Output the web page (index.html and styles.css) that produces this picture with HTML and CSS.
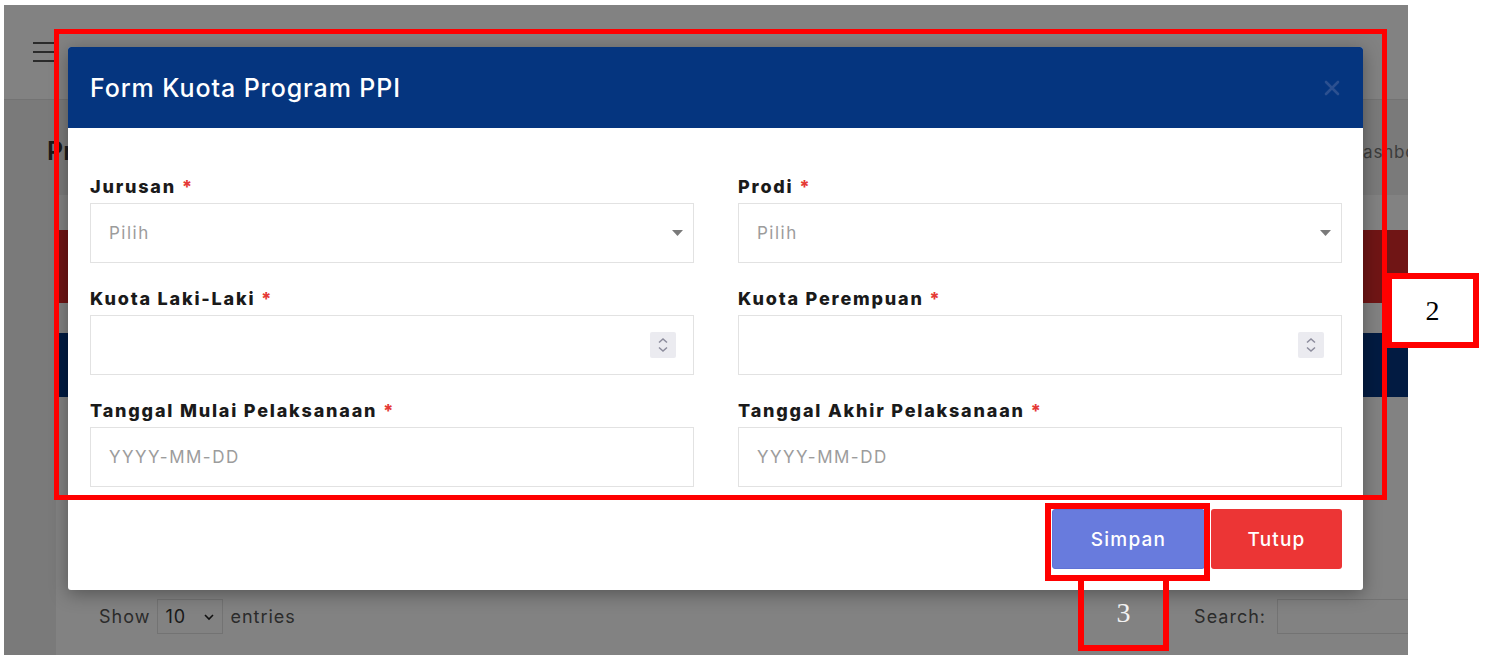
FILE: index.html
```html
<!DOCTYPE html>
<html lang="id">
<head>
    <meta charset="UTF-8">
    <meta name="viewport" content="width=device-width, initial-scale=1.0">
    <title>Form Kuota Program PPI</title>
    <link rel="stylesheet" href="styles.css">
</head>
<body>
    <div class="screen">
        <header class="navbar">
            <div class="hamburger">
                <span></span>
                <span></span>
                <span></span>
            </div>
        </header>

        <div class="content">
            <div class="section-header">
                <h1>Program PPI</h1>
                <div class="breadcrumb">Dashboard</div>
            </div>

            <div class="card">
                <div class="alert-bar"></div>
                <div class="table-head"></div>
                <div class="dt-top">
                    <div class="dt-length">
                        Show
                        <div class="dt-select">10
                            <svg width="12" height="8" viewBox="0 0 12 8"><polyline points="2,2 6,6 10,2" fill="none" stroke="#222" stroke-width="1.6"/></svg>
                        </div>
                        entries
                    </div>
                    <div class="dt-search">
                        Search:
                        <div class="dt-input"></div>
                    </div>
                </div>
            </div>
        </div>

        <div class="backdrop"></div>

        <div class="modal">
            <div class="modal-header">
                <h2>Form Kuota Program PPI</h2>
                <button class="close-btn">
                    <svg width="16" height="16" viewBox="0 0 16 16"><path d="M2 2 L14 14 M14 2 L2 14" stroke="#2c5090" stroke-width="2.6" stroke-linecap="round"/></svg>
                </button>
            </div>
            <div class="modal-body">
                <div class="form-group">
                    <label>Jurusan <span class="req">*</span></label>
                    <div class="form-control select">
                        <span class="placeholder">Pilih</span>
                        <svg width="11" height="6" viewBox="0 0 11 6"><polygon points="0,0 11,0 5.5,6" fill="#7a7a7a"/></svg>
                    </div>
                </div>
                <div class="form-group">
                    <label>Prodi <span class="req">*</span></label>
                    <div class="form-control select">
                        <span class="placeholder">Pilih</span>
                        <svg width="11" height="6" viewBox="0 0 11 6"><polygon points="0,0 11,0 5.5,6" fill="#7a7a7a"/></svg>
                    </div>
                </div>
                <div class="form-group">
                    <label>Kuota Laki-Laki <span class="req">*</span></label>
                    <div class="form-control number">
                        <span class="placeholder"></span>
                        <span class="spinner">
                            <svg width="26" height="26" viewBox="0 0 26 26"><polyline points="9,10.5 13,7 17,10.5" fill="none" stroke="#8c8c9c" stroke-width="1.5"/><polyline points="9,15.5 13,19 17,15.5" fill="none" stroke="#8c8c9c" stroke-width="1.5"/></svg>
                        </span>
                    </div>
                </div>
                <div class="form-group">
                    <label>Kuota Perempuan <span class="req">*</span></label>
                    <div class="form-control number">
                        <span class="placeholder"></span>
                        <span class="spinner">
                            <svg width="26" height="26" viewBox="0 0 26 26"><polyline points="9,10.5 13,7 17,10.5" fill="none" stroke="#8c8c9c" stroke-width="1.5"/><polyline points="9,15.5 13,19 17,15.5" fill="none" stroke="#8c8c9c" stroke-width="1.5"/></svg>
                        </span>
                    </div>
                </div>
                <div class="form-group">
                    <label>Tanggal Mulai Pelaksanaan <span class="req">*</span></label>
                    <div class="form-control">
                        <span class="placeholder">YYYY-MM-DD</span>
                    </div>
                </div>
                <div class="form-group">
                    <label>Tanggal Akhir Pelaksanaan <span class="req">*</span></label>
                    <div class="form-control">
                        <span class="placeholder">YYYY-MM-DD</span>
                    </div>
                </div>
            </div>
            <div class="modal-footer">
                <button class="btn btn-primary">Simpan</button>
                <button class="btn btn-danger">Tutup</button>
            </div>
        </div>
    </div>

    <!-- annotation boxes drawn on top of the screenshot -->
    <div class="mark mark-form"></div>
    <div class="mark mark-label mark-2">2</div>
    <div class="mark mark-save"></div>
    <div class="mark mark-label mark-3">3</div>
</body>
</html>
```

FILE: styles.css
```css
body {
    margin: 0;
    background-color: #fff;
    font-family: 'Inter', 'Open Sans', sans-serif;
    position: relative;
    height: 665px;
    overflow: hidden;
}
.screen {
    position: relative;
    width: 1404px;
    height: 650px;
    margin: 5px 0 0 4px;
    background-color: #efefef;
    overflow: hidden;
}

/* page behind the modal */
.navbar {
    height: 95px;
    background-color: #fff;
    border-bottom: 1px solid #e2e2e2;
    box-sizing: border-box;
    display: flex;
    align-items: center;
    padding-left: 29px;
}
.hamburger {
    display: flex;
    flex-direction: column;
    gap: 6.5px;
}
.hamburger span {
    width: 24px;
    height: 2.5px;
    background-color: #555;
}
.content {
    padding-left: 43px;
}
.section-header {
    display: grid;
    grid-template-columns: 1303px max-content;
    align-items: center;
    padding-top: 36px;
    height: 30px;
}
.section-header h1 {
    margin: 0;
    font-size: 25px;
    font-weight: 600;
    color: #333;
    line-height: 30px;
}
.breadcrumb {
    font-size: 17px;
    letter-spacing: 0.8px;
    color: #777;
    white-space: nowrap;
    margin-top: 2px;
}
.card {
    width: 1445px;
    margin: 29px 0 0 9px;
    padding-top: 35px;
    height: 460px;
    background-color: #fff;
}
.alert-bar {
    height: 73px;
    background-color: #dc2a2a;
}
.table-head {
    height: 64px;
    margin-top: 30px;
    background-color: #053582;
}
.dt-top {
    display: flex;
    align-items: center;
    justify-content: space-between;
    margin-top: 202px;
    padding: 0 43px;
    height: 35px;
    font-size: 18px;
    letter-spacing: 1px;
    color: #555;
}
.dt-length, .dt-search {
    display: flex;
    align-items: center;
    gap: 7px;
}
.dt-select {
    width: 66px;
    height: 35px;
    box-sizing: border-box;
    border: 1px solid #e2e2e2;
    display: flex;
    align-items: center;
    justify-content: space-between;
    padding: 0 7px;
    color: #333;
}
.dt-search {
    gap: 11px;
}
.dt-input {
    width: 181px;
    height: 35px;
    box-sizing: border-box;
    border: 1px solid #e2e2e2;
}
.backdrop {
    position: absolute;
    inset: 0;
    background-color: rgba(0, 0, 0, 0.49);
}

/* modal */
.modal {
    position: absolute;
    left: 64px;
    top: 42px;
    width: 1295px;
    background-color: #fff;
    border-radius: 3px;
    box-shadow: 0 4px 18px rgba(0, 0, 0, 0.35);
}
.modal-header {
    height: 81px;
    background-color: #05357f;
    border-radius: 3px 3px 0 0;
    display: flex;
    align-items: center;
    justify-content: space-between;
    padding: 0 23px 0 22px;
}
.modal-header h2 {
    margin: 0;
    font-size: 25px;
    font-weight: 500;
    letter-spacing: 0.9px;
    color: #fff;
}
.close-btn {
    background: none;
    border: none;
    padding: 0;
    display: flex;
}
.modal-body {
    display: grid;
    grid-template-columns: 1fr 1fr;
    column-gap: 44px;
    row-gap: 24px;
    padding: 47px 21px 0 22px;
}
.form-group label {
    display: block;
    font-size: 18px;
    font-weight: 800;
    letter-spacing: 1.8px;
    line-height: 24px;
    color: #1a1a1a;
    margin-bottom: 4px;
}
.req {
    color: #e53935;
}
.form-control {
    height: 60px;
    box-sizing: border-box;
    border: 1px solid #e2e2e2;
    display: flex;
    align-items: center;
    justify-content: space-between;
    padding: 0 18px;
    font-size: 17px;
    letter-spacing: 1.5px;
}
.form-control.select {
    padding-right: 10px;
}
.form-control.number {
    padding-right: 17px;
}
.placeholder {
    color: #9c9c9c;
}
.spinner {
    display: flex;
    background-color: #ebebf0;
    border-radius: 2px;
}
.modal-footer {
    display: flex;
    justify-content: flex-end;
    gap: 6px;
    padding: 22px 21px 21px;
}
.btn {
    height: 60px;
    border: 1px solid transparent;
    border-radius: 3px;
    font-family: inherit;
    font-size: 19px;
    font-weight: 500;
    letter-spacing: 1.2px;
    color: #fff;
    cursor: pointer;
}
.btn-primary {
    width: 153px;
    background-color: #687bdd;
    border-color: #5f72d6;
}
.btn-danger {
    width: 131px;
    background-color: #ec3535;
}

/* annotations */
.mark {
    position: absolute;
    box-sizing: border-box;
    border: 6px solid #ff0000;
}
.mark-form {
    left: 54px;
    top: 29px;
    width: 1333px;
    height: 471px;
    border-width: 5px;
}
.mark-save {
    left: 1045px;
    top: 503px;
    width: 165px;
    height: 78px;
}
.mark-label {
    display: flex;
    align-items: center;
    justify-content: center;
    font-family: 'Liberation Serif', serif;
    font-size: 28px;
}
.mark-2 {
    left: 1386px;
    top: 273px;
    width: 93px;
    height: 75px;
    background-color: #fff;
    color: #000;
}
.mark-3 {
    left: 1078px;
    top: 575px;
    width: 91px;
    height: 76px;
    color: #f2f2f2;
}
```
